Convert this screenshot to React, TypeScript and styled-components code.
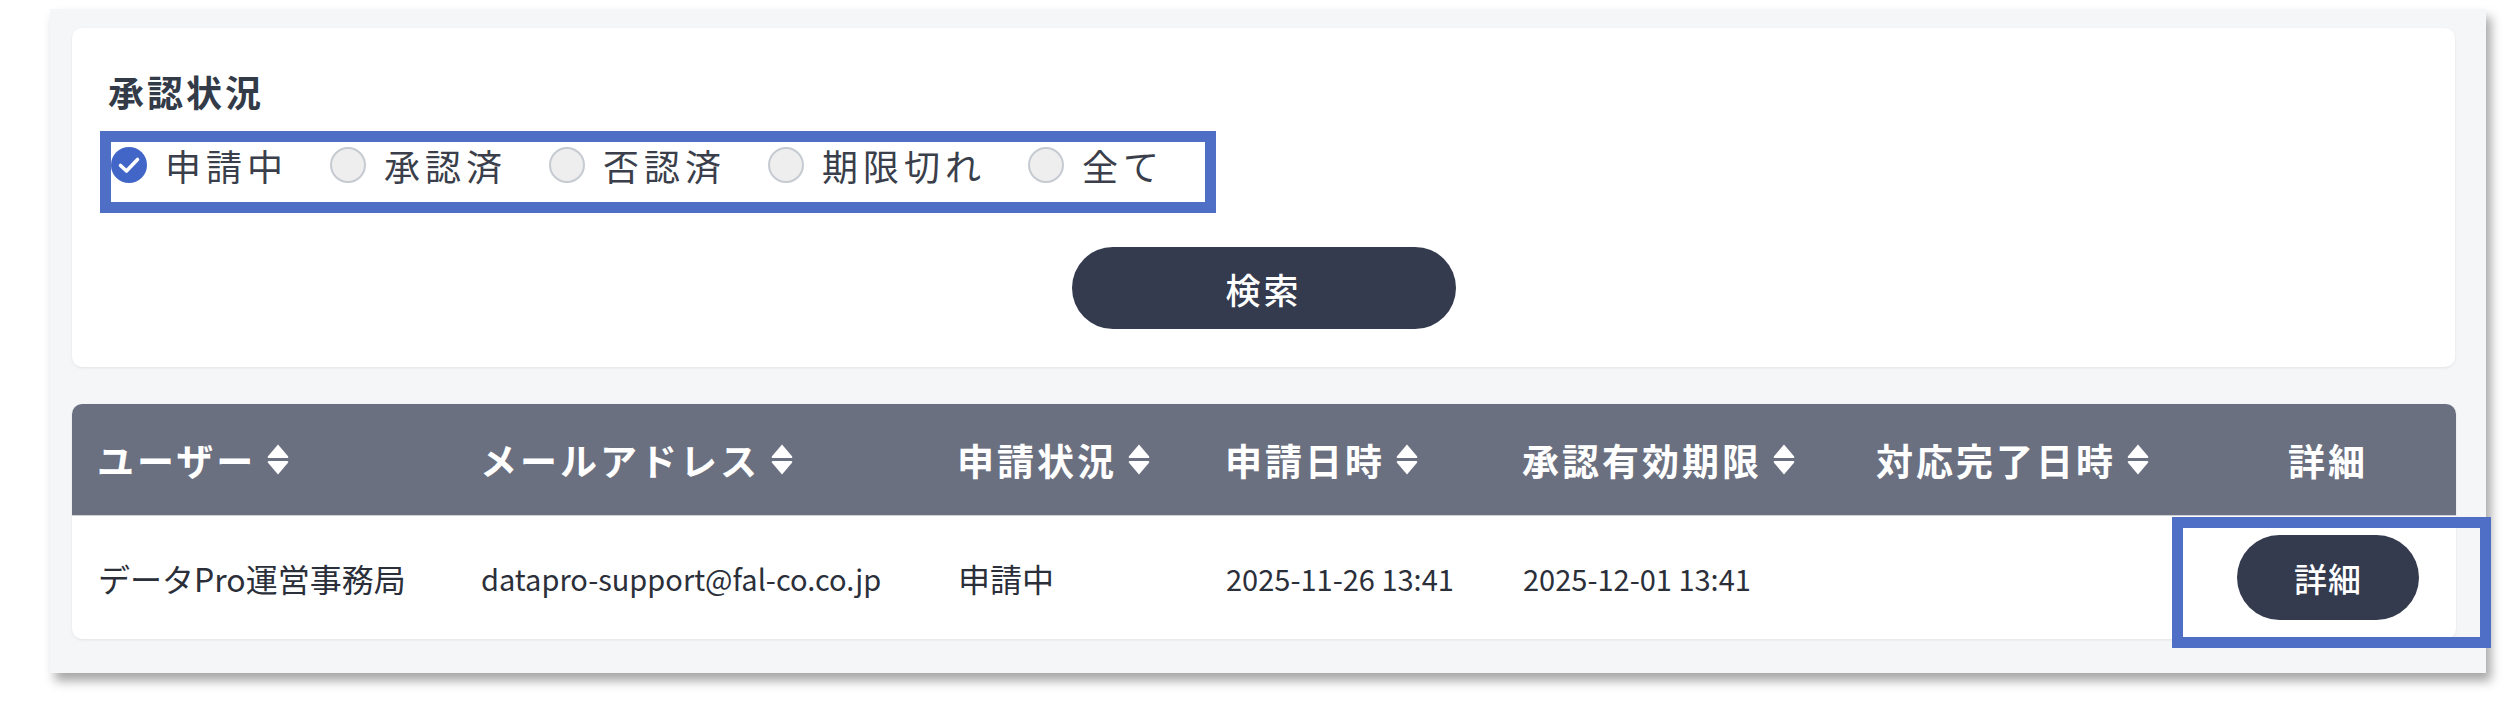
import React from 'react';
import styled, { createGlobalStyle } from 'styled-components';

const GlobalStyle = createGlobalStyle`
  body {
    margin: 0;
    background: #fff;
    font-family: "Noto Sans CJK JP", "Noto Sans", sans-serif;
  }
`;

// outer framed screenshot area
const Page = styled.div`
  padding: 9px 0 30px 50px;
`;

const Frame = styled.div`
  width: 2436px;
  box-sizing: border-box;
  background: #f5f6f8;
  padding: 19px 30px 34px 22px;
  display: flex;
  flex-direction: column;
  gap: 37px;
  box-shadow: 5px 8px 10px rgba(0, 0, 0, 0.35);
`;

const Card = styled.div`
  position: relative;
  background: #fff;
  border-radius: 10px;
  box-shadow: 0 1px 3px rgba(0, 0, 0, 0.08);
`;

const SearchCard = styled(Card)`
  width: 2383px;
  box-sizing: border-box;
  padding: 41px 36px 38px;
  display: flex;
  flex-direction: column;
`;

const Title = styled.div`
  font-size: 36px;
  line-height: 44px;
  font-weight: 700;
  letter-spacing: 3px;
  color: #333a48;
`;

const RadioGroup = styled.div`
  display: flex;
  align-items: center;
  gap: 42px;
  margin: 30px 0 0 3px;
`;

const RadioItem = styled.label`
  display: flex;
  align-items: center;
  gap: 18px;
  font-size: 36px;
  line-height: 44px;
  letter-spacing: 5px;
  color: #3a3f4b;
`;

const RadioCircle = styled.span`
  width: 36px;
  height: 36px;
  box-sizing: border-box;
  border-radius: 50%;
  background: #eeeeef;
  border: 2px solid #c6cad1;
`;

const SearchButton = styled.button`
  align-self: center;
  margin-top: 60px;
  width: 384px;
  height: 82px;
  border: none;
  border-radius: 41px;
  background: #343b4f;
  color: #fff;
  font-family: inherit;
  font-size: 35px;
  font-weight: 500;
  letter-spacing: 3px;
`;

const Highlight = styled.div<{ $left: number; $top: number; $w: number; $h: number }>`
  position: absolute;
  left: ${(p) => p.$left}px;
  top: ${(p) => p.$top}px;
  width: ${(p) => p.$w}px;
  height: ${(p) => p.$h}px;
  box-sizing: border-box;
  border: 11px solid #4f6ec6;
  pointer-events: none;
`;

const TableCard = styled(Card)`
  width: 2384px;
`;

const cols = '383px 477px 268px 297px 354px 349px 256px';

const HeaderRow = styled.div`
  display: grid;
  grid-template-columns: ${cols};
  height: 112px;
  align-items: center;
  background: #6b7080;
  border-radius: 10px 10px 0 0;
  border-bottom: 1px solid #cfd2d8;
  box-sizing: border-box;
`;

const HeadCell = styled.div<{ $center?: boolean }>`
  display: flex;
  align-items: center;
  justify-content: ${(p) => (p.$center ? 'center' : 'flex-start')};
  padding-left: ${(p) => (p.$center ? 0 : 25)}px;
  font-size: 37px;
  font-weight: 700;
  letter-spacing: 3px;
  color: #fff;
  white-space: nowrap;
`;

const SortIcon = styled.svg`
  width: 24px;
  height: 33px;
  margin-left: 10px;
  flex: none;
`;

const BodyRow = styled.div`
  display: grid;
  grid-template-columns: ${cols};
  height: 123px;
  align-items: center;
`;

// latin-only cells (mail, dates) render with a narrower face in the original
const Cell = styled.div<{ $center?: boolean; $latin?: boolean }>`
  display: flex;
  justify-content: ${(p) => (p.$center ? 'center' : 'flex-start')};
  padding-left: ${(p) => (p.$center ? 0 : 26)}px;
  font-size: ${(p) => (p.$latin ? 29 : 32)}px;
  color: #2b2f3a;
  white-space: nowrap;
`;

const DetailButton = styled.button`
  width: 182px;
  height: 85px;
  border: none;
  border-radius: 43px;
  background: #343b4f;
  color: #fff;
  font-family: inherit;
  font-size: 33px;
  font-weight: 500;
  letter-spacing: 1px;
`;

const Sort = () => (
  <SortIcon viewBox="0 0 24 33">
    <path d="M12 1.5 L22 13.2 Q23 15 21 15 H3 Q1 15 2 13.2 Z" fill="#fff" />
    <path d="M3 18 H21 Q23 18 22 19.8 L12 31.5 L2 19.8 Q1 18 3 18 Z" fill="#fff" />
  </SortIcon>
);

const CheckedCircle = () => (
  <svg width="36" height="36" viewBox="0 0 36 36">
    <circle cx="18" cy="18" r="18" fill="#4266c8" />
    <path d="M9.5 18.5 L15.5 24 L26.5 12.5" fill="none" stroke="#fff" strokeWidth="3.6" strokeLinecap="round" strokeLinejoin="round" />
  </svg>
);

const statuses = ['申請中', '承認済', '否認済', '期限切れ', '全て'];

const headers = [
  { label: 'ユーザー', sort: true },
  { label: 'メールアドレス', sort: true },
  { label: '申請状況', sort: true },
  { label: '申請日時', sort: true },
  { label: '承認有効期限', sort: true },
  { label: '対応完了日時', sort: true },
  { label: '詳細', sort: false },
];

const row = {
  user: 'データPro運営事務局',
  email: 'datapro-support@fal-co.co.jp',
  status: '申請中',
  appliedAt: '2025-11-26 13:41',
  expiresAt: '2025-12-01 13:41',
  doneAt: '',
};

const App = () => {
  return (
    <>
      <GlobalStyle />
      <Page>
        <Frame>
          <SearchCard>
            <Title>承認状況</Title>
            <RadioGroup>
              {statuses.map((s, i) => (
                <RadioItem key={s}>
                  {i === 0 ? <CheckedCircle /> : <RadioCircle />}
                  {s}
                </RadioItem>
              ))}
            </RadioGroup>
            <SearchButton>検索</SearchButton>
            <Highlight $left={28} $top={103} $w={1116} $h={82} />
          </SearchCard>

          <TableCard>
            <HeaderRow>
              {headers.map((h) => (
                <HeadCell key={h.label} $center={!h.sort}>
                  {h.label}
                  {h.sort && <Sort />}
                </HeadCell>
              ))}
            </HeaderRow>
            <BodyRow>
              <Cell>{row.user}</Cell>
              <Cell $latin>{row.email}</Cell>
              <Cell>{row.status}</Cell>
              <Cell $latin>{row.appliedAt}</Cell>
              <Cell $latin>{row.expiresAt}</Cell>
              <Cell>{row.doneAt}</Cell>
              <Cell $center>
                <DetailButton>詳細</DetailButton>
              </Cell>
            </BodyRow>
            <Highlight $left={2100} $top={113} $w={319} $h={131} />
          </TableCard>
        </Frame>
      </Page>
    </>
  );
};

export default App;
